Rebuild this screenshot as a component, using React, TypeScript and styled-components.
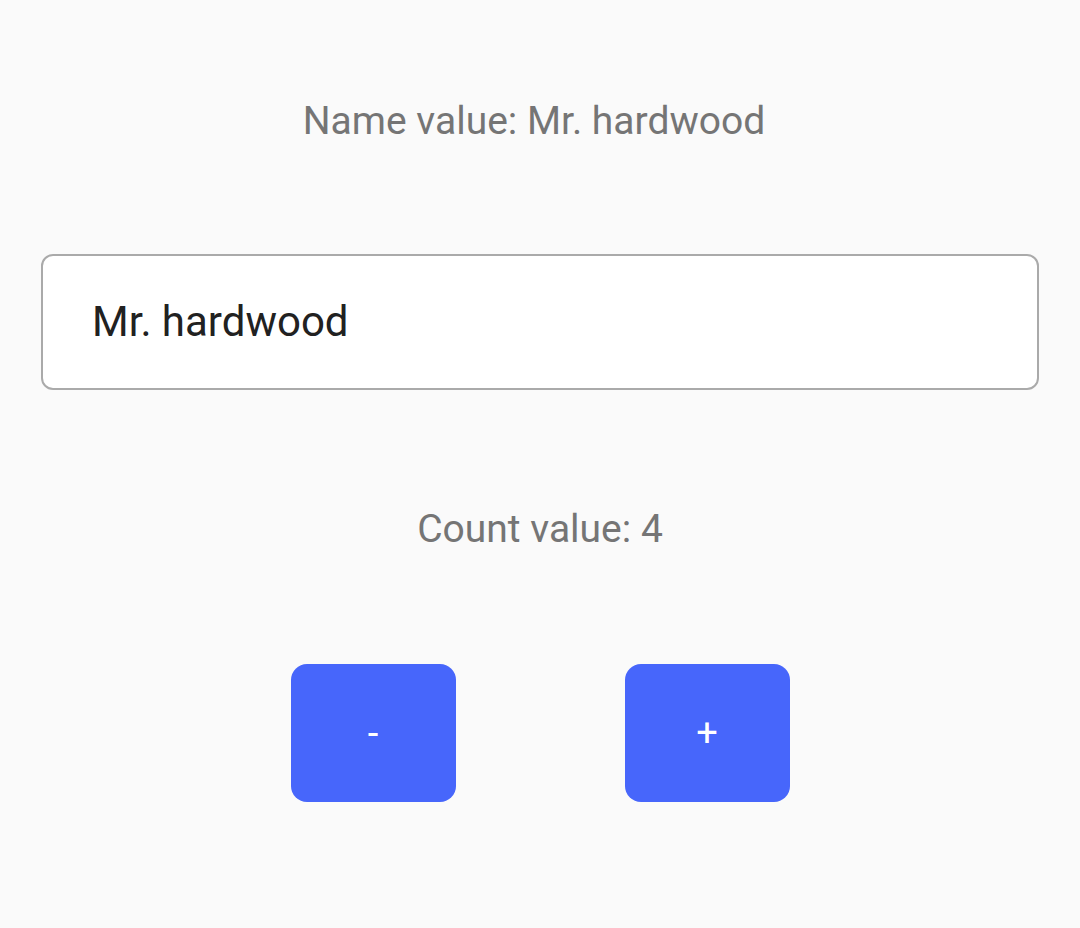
import React, { useState } from "react";
import styled, { createGlobalStyle } from "styled-components";

const GlobalStyle = createGlobalStyle`
  html, body {
    margin: 0;
    padding: 0;
    background: #fafafa;
    font-family: Roboto, "Noto Sans", Arial, sans-serif;
  }
`;

/* ---------------- Layout ---------------- */

const Page = styled.main`
  min-height: 928px;
  box-sizing: border-box;
  padding: 99px 41px 0 41px;
  display: flex;
  flex-direction: column;
  align-items: center;
`;

const ValueText = styled.p<{ $gap: number; $shift?: number }>`
  margin: 0 0 ${(p) => p.$gap}px;
  font-size: 39px;
  line-height: 1.172;
  color: #757575;
  padding-right: ${(p) => p.$shift ?? 0}px;
`;

/* ---------------- Input ---------------- */

const NameInput = styled.input`
  box-sizing: border-box;
  width: 100%;
  height: 136px;
  margin: 0 0 117px;
  padding: 0 49px;
  border: 2px solid #aaaaaa;
  border-radius: 12px;
  background: #ffffff;
  font-family: inherit;
  font-size: 42px;
  color: #212121;
  outline: none;
`;

/* ---------------- Counter buttons ---------------- */

const ButtonRow = styled.div`
  display: flex;
  gap: 169px;
`;

const CountButton = styled.button`
  width: 165px;
  height: 138px;
  border: none;
  border-radius: 16px;
  background: #4766fb;
  color: #ffffff;
  font-family: inherit;
  font-size: 38px;
  display: flex;
  align-items: center;
  justify-content: center;
  cursor: pointer;
`;

export default function App() {
  const [name, setName] = useState("Mr. hardwood");
  const [count, setCount] = useState(4);

  return (
    <>
      <GlobalStyle />
      <Page>
        <ValueText $gap={109} $shift={12}>Name value: {name}</ValueText>
        <NameInput value={name} onChange={(e) => setName(e.target.value)} />
        <ValueText $gap={112}>Count value: {count}</ValueText>
        <ButtonRow>
          <CountButton onClick={() => setCount((c) => c - 1)}>-</CountButton>
          <CountButton onClick={() => setCount((c) => c + 1)}>+</CountButton>
        </ButtonRow>
      </Page>
    </>
  );
}
